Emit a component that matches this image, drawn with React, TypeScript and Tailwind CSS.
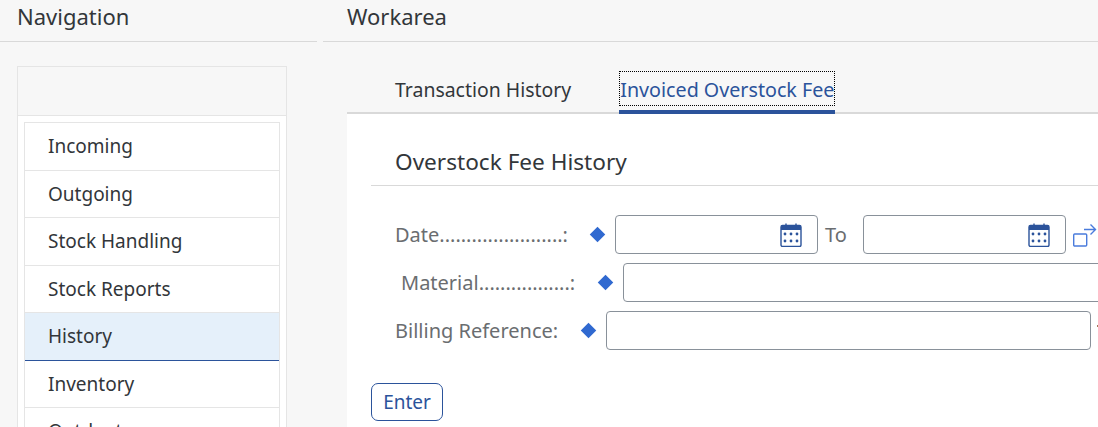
const navItems = ['Incoming', 'Outgoing', 'Stock Handling', 'Stock Reports', 'History', 'Inventory', 'Outdent'];

function CalendarIcon() {
  return (
    <svg width="22" height="24" viewBox="0 0 22 24" className="shrink-0">
      <rect x="1" y="2.5" width="20" height="21" rx="1.5" fill="#fff" stroke="#2b539b" strokeWidth="1.4" />
      <path d="M1 4a1.5 1.5 0 0 1 1.5-1.5h17A1.5 1.5 0 0 1 21 4v3H1z" fill="#2b539b" />
      <path d="M6 0.5v4M16 0.5v4" stroke="#2b539b" strokeWidth="1.4" />
      <g fill="#2b539b">
        <circle cx="5" cy="11" r="1.4" />
        <circle cx="11" cy="11" r="1.4" />
        <circle cx="17" cy="11" r="1.4" />
        <circle cx="5" cy="18" r="1.4" />
        <circle cx="11" cy="18" r="1.4" />
        <circle cx="17" cy="18" r="1.4" />
      </g>
    </svg>
  );
}

function Diamond() {
  return <span className="mt-[-1px] size-[11px] shrink-0 rotate-45 bg-[#3069d0]" />;
}

function Field({ className }: { className: string }) {
  return <div className={`h-[39px] shrink-0 rounded-[4px] border border-[#89919a] bg-white ${className}`} />;
}

export default function App() {
  return (
    <div className="flex h-[427px] w-[1098px] overflow-hidden bg-[#f7f7f7] font-['Noto_Sans',sans-serif] text-[#32363a]">
      <div className="w-[317px] shrink-0">
        <div className="h-[42px] border-b border-[#d9d9d9] pl-[17px] text-[22px] leading-[32px]">Navigation</div>
        <div className="ml-[17px] mt-[24px] w-[270px] border border-[#e5e5e5]">
          <div className="h-[49px] border-b border-[#e5e5e5]" />
          <div className="bg-white px-[6px] pt-[6px]">
            <ul className="border border-[#e5e5e5]">
              {navItems.map((item) => (
                <li
                  key={item}
                  className={
                    item === 'History'
                      ? 'flex h-[47.5px] items-center border-b border-[#2b539b] bg-[#e5f0fa] pl-[23px] text-[19px]'
                      : 'flex h-[47.5px] items-center border-b border-[#e5e5e5] pl-[23px] text-[19px]'
                  }
                >
                  {item}
                </li>
              ))}
            </ul>
          </div>
        </div>
      </div>

      <div className="ml-[6px] min-w-0 flex-1">
        <div className="h-[42px] border-b border-[#d9d9d9] pl-[24px] text-[22px] leading-[32px]">Workarea</div>
        <div className="ml-[24px]">
          <div className="flex h-[72px] items-end gap-[48px] border-b-2 border-[#d9d9d9] pl-[48px]">
            <div className="mb-[-2px] h-[44px] whitespace-nowrap pt-[6px] text-[19.45px] leading-[28px]">Transaction History</div>
            <div className="mb-[-2px] flex h-[44px] flex-col justify-between whitespace-nowrap border-b-4 border-[#2b539b] pt-[1px] text-[19.7px] text-[#2b539b]">
              <span className="h-[35px] border border-dotted border-black leading-[36px]">Invoiced Overstock Fee</span>
            </div>
          </div>

          <div className="h-[313px] overflow-hidden bg-white pl-[24px]">
            <div className="flex h-[72px] items-end border-b border-[#d9d9d9] pb-[7px] pl-[24px] text-[22.6px] leading-[32px]">
              Overstock Fee History
            </div>

            <div className="mt-[29px] flex flex-col gap-[9px] text-[20px] text-[#6a6d70]">
              <div className="flex h-[39px] items-center pl-[24px]">
                <span className="w-[196.5px] shrink-0 whitespace-nowrap pt-[1px]">Date.......................:</span>
                <Diamond />
                <Field className="ml-[12.5px] w-[203px]" />
                <div className="ml-[-38px] w-[38px] shrink-0"><CalendarIcon /></div>
                <span className="ml-[7px] w-[38px] shrink-0 pt-[1px]">To</span>
                <Field className="w-[203px]" />
                <div className="ml-[-38px] w-[38px] shrink-0"><CalendarIcon /></div>
                <svg width="24" height="24" viewBox="0 0 24 24" className="ml-[7px] shrink-0">
                  <rect x="0.7" y="11" width="13" height="12" rx="1" fill="none" stroke="#4a7bdc" strokeWidth="1.4" />
                  <path d="M11 6.5h11M17.5 1.5l5 5-5 5" fill="none" stroke="#4a7bdc" strokeWidth="1.4" />
                </svg>
              </div>
              <div className="flex h-[39px] items-center pl-[30px]">
                <span className="w-[198.5px] shrink-0 whitespace-nowrap pt-[1px]">Material.................:</span>
                <Diamond />
                <Field className="ml-[12.5px] w-[500px]" />
              </div>
              <div className="flex h-[39px] items-center pl-[24px]">
                <span className="w-[187.5px] shrink-0 whitespace-nowrap">Billing Reference:</span>
                <Diamond />
                <Field className="ml-[12.5px] w-[485px]" />
                <span className="ml-[6px] mt-[-10px] h-[2px] w-[1px] shrink-0 bg-[#a0785a]" />
              </div>
            </div>

            <button className="mt-[33px] h-[38px] w-[72px] rounded-[7px] border border-[#2b539b] text-[19px] text-[#2b539b]">Enter</button>
          </div>
        </div>
      </div>
    </div>
  );
}
